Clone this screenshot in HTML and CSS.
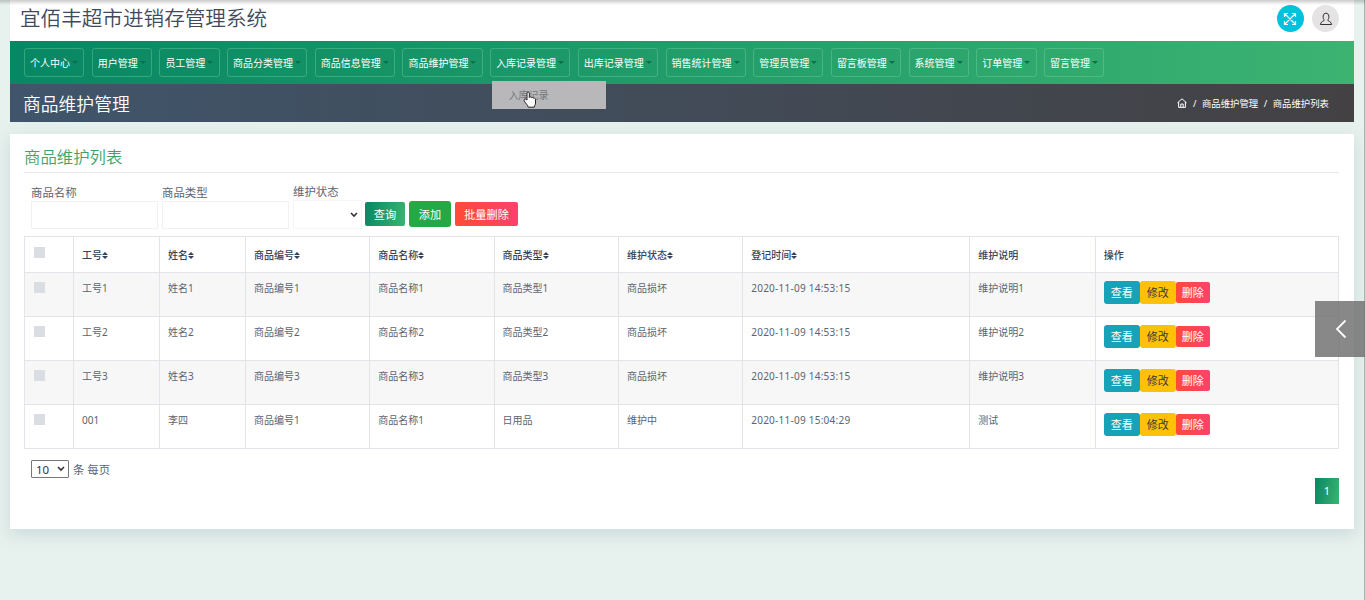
FILE: index.html
```html
<!DOCTYPE html>
<html lang="zh-CN">
<head>
    <meta charset="UTF-8">
    <meta name="viewport" content="width=device-width, initial-scale=1.0">
    <title>商品维护管理</title>
    <link rel="stylesheet" href="styles.css">
</head>
<body>
    <div class="wrapper">
        <!-- 顶部 -->
        <header class="top-bar">
            <h1>宜佰丰超市进销存管理系统</h1>
            <div class="top-icons">
                <a class="round full"><svg width="14" height="14" viewBox="0 0 14 14"><path d="M2 2l10 10M12 2L2 12M1.500 5V1.500H5M9 1.500h3.500V5M1.500 9v3.500H5M9 12.500h3.500V9"/></svg></a>
                <a class="round user"><svg width="14" height="14" viewBox="0 0 14 14"><path d="M5.300 8C3.500 6.500 3.500 1.200 7 1.200S10.500 6.500 8.700 8c0 1.500 3.800 1.200 3.900 4.500H1.400C1.500 9.200 5.300 9.500 5.300 8z"/></svg></a>
            </div>
        </header>

        <!-- 导航 -->
        <nav class="menu">
            <a>个人中心</a>
            <a>用户管理</a>
            <a>员工管理</a>
            <a>商品分类管理</a>
            <a>商品信息管理</a>
            <a>商品维护管理</a>
            <div class="dropdown">
                <a>入库记录管理</a>
                <div class="dropdown-menu">入库记录
                    <svg class="cursor" width="14" height="17" viewBox="0 0 14 17"><path d="M4 9V2.200c0-1.700 2.300-1.700 2.300 0V6.500c.3-1 2-.8 2.200.3.500-.8 2-.5 2.100.5.800-.5 1.900 0 1.900 1V12c0 2-1.200 2.500-1.200 4.200H5.200C5 14 2.500 12.500 1.200 9.800.5 8.300 2.300 7.500 3 8.500z"/></svg>
                </div>
            </div>
            <a>出库记录管理</a>
            <a>销售统计管理</a>
            <a>管理员管理</a>
            <a>留言板管理</a>
            <a>系统管理</a>
            <a>订单管理</a>
            <a>留言管理</a>
        </nav>

        <!-- 面包屑 -->
        <div class="title-bar">
            <h2>商品维护管理</h2>
            <div class="breadcrumb">
                <svg width="10" height="10" viewBox="0 0 10 10"><path d="M.5 4.800L5 .8l4.500 4M1.600 4v5.400h6.800V4M3.800 9.200V6h2.400v3.200"/></svg>
                <span>/</span><span>商品维护管理</span><span>/</span><span>商品维护列表</span>
            </div>
        </div>

        <!-- 列表 -->
        <main class="card">
            <h3>商品维护列表</h3>
            <form class="search">
                <label>商品名称<input type="text"></label>
                <label>商品类型<input type="text"></label>
                <label class="state">维护状态<span class="select"><svg width="8" height="6" viewBox="0 0 8 6"><path d="M1 1l3 3 3-3"/></svg></span></label>
                <button type="button" class="btn query">查询</button>
                <button type="button" class="btn add">添加</button>
                <button type="button" class="btn batch">批量删除</button>
            </form>
            <table>
                <colgroup>
                    <col class="w-check"><col class="w-s"><col class="w-s"><col class="w-m"><col class="w-m"><col class="w-m"><col class="w-m"><col class="w-time"><col class="w-note"><col>
                </colgroup>
                <thead>
                    <tr>
                        <th><i class="check"></i></th>
                        <th>工号<i class="sort"></i></th>
                        <th>姓名<i class="sort"></i></th>
                        <th>商品编号<i class="sort"></i></th>
                        <th>商品名称<i class="sort"></i></th>
                        <th>商品类型<i class="sort"></i></th>
                        <th>维护状态<i class="sort"></i></th>
                        <th>登记时间<i class="sort"></i></th>
                        <th>维护说明</th>
                        <th>操作</th>
                    </tr>
                </thead>
                <tbody>
                    <tr>
                        <td><i class="check"></i></td><td>工号1</td><td>姓名1</td><td>商品编号1</td><td>商品名称1</td><td>商品类型1</td><td>商品损坏</td><td class="time">2020-11-09 14:53:15</td><td>维护说明1</td>
                        <td><div class="actions"><button class="view">查看</button><button class="edit">修改</button><button class="del">删除</button></div></td>
                    </tr>
                    <tr>
                        <td><i class="check"></i></td><td>工号2</td><td>姓名2</td><td>商品编号2</td><td>商品名称2</td><td>商品类型2</td><td>商品损坏</td><td class="time">2020-11-09 14:53:15</td><td>维护说明2</td>
                        <td><div class="actions"><button class="view">查看</button><button class="edit">修改</button><button class="del">删除</button></div></td>
                    </tr>
                    <tr>
                        <td><i class="check"></i></td><td>工号3</td><td>姓名3</td><td>商品编号3</td><td>商品名称3</td><td>商品类型3</td><td>商品损坏</td><td class="time">2020-11-09 14:53:15</td><td>维护说明3</td>
                        <td><div class="actions"><button class="view">查看</button><button class="edit">修改</button><button class="del">删除</button></div></td>
                    </tr>
                    <tr>
                        <td><i class="check"></i></td><td>001</td><td>李四</td><td>商品编号1</td><td>商品名称1</td><td>日用品</td><td>维护中</td><td class="time">2020-11-09 15:04:29</td><td>测试</td>
                        <td><div class="actions"><button class="view">查看</button><button class="edit">修改</button><button class="del">删除</button></div></td>
                    </tr>
                </tbody>
            </table>
            <div class="page-size">
                <span class="size-select">10<svg width="8" height="6" viewBox="0 0 8 6"><path d="M1 1l3 3 3-3"/></svg></span>
                条 每页
            </div>
            <div class="pagination"><a>1</a></div>
        </main>
    </div>

    <div class="side-toggle"><svg width="12" height="20" viewBox="0 0 12 20"><path d="M10.500 1.500L2 10l8.500 8.500"/></svg></div>
</body>
</html>
```
FILE: styles.css
```css
* {
    box-sizing: border-box;
}
body {
    margin: 0;
    height: 600px;
    overflow: hidden;
    background-color: #e7f1ed;
    border-right: 1px solid #aab5b2;
    font-family: "Noto Sans", "Noto Sans CJK SC", sans-serif;
    font-weight: 400;
    font-size: 12px;
    color: #5a6474;
}
/* 页面顶端的阴影 */
body::before {
    content: "";
    position: absolute;
    top: 0;
    left: 0;
    right: 0;
    height: 5px;
    background: linear-gradient(rgba(0, 0, 0, 0.2), rgba(0, 0, 0, 0));
}
svg {
    fill: none;
    stroke: currentColor;
}
h1, h2, h3 {
    margin: 0;
    font-weight: 350;
}
.wrapper {
    width: 1344px;
    margin-left: 10px;
}
.top-bar {
    display: flex;
    justify-content: space-between;
    height: 41px;
    padding: 0 15px 0 10px;
    background-color: #fff;
}
.top-bar h1 {
    font-size: 20.600px;
    line-height: 36px;
    color: #3f4a5e;
}
.top-icons {
    display: flex;
    gap: 8px;
    padding-top: 5px;
}
.round {
    display: flex;
    align-items: center;
    justify-content: center;
    width: 27px;
    height: 27px;
    border-radius: 50%;
}
.full {
    background-color: #00c2dc;
    color: #fff;
}
.full svg {
    margin-right: 1px;
    stroke-width: 1.200;
}
.user {
    background-color: #e6e3e4;
    color: #333;
}
.menu {
    display: flex;
    gap: 7.400px;
    height: 43px;
    padding: 7px 14px;
    background: linear-gradient(90deg, #078763, #3cb371);
}
.menu a {
    display: flex;
    align-items: center;
    height: 29px;
    padding: 0 5.300px 0 5px;
    border: 1px solid rgba(130, 220, 170, 0.35);
    border-radius: 3px;
    font-size: 10px;
    color: #fff;
    white-space: nowrap;
}
.menu a::after {
    content: "";
    margin-left: 2px;
    border: 3px solid transparent;
    border-top-color: #08704d;
    border-bottom: 0;
}
.dropdown {
    position: relative;
}
.dropdown-menu {
    position: absolute;
    top: 33px;
    left: 1.500px;
    z-index: 2;
    width: 114px;
    height: 28px;
    padding-left: 17px;
    background-color: #b8b8ba;
    color: #77777c;
    font-size: 10px;
    line-height: 28px;
}
.cursor {
    position: absolute;
    left: 31px;
    top: 10px;
    fill: #fff;
    stroke: #222;
}
.title-bar {
    display: flex;
    justify-content: space-between;
    align-items: center;
    height: 38px;
    padding: 0 25px 0 13px;
    background: linear-gradient(90deg, #40556b, #434144);
    color: #fff;
}
.title-bar h2 {
    font-size: 17.800px;
}
.breadcrumb {
    display: flex;
    align-items: center;
    gap: 5.500px;
    font-size: 9.400px;
}
.card {
    height: 395px;
    margin-top: 12px;
    padding: 11px 15px 0 14px;
    background-color: #fff;
    box-shadow: 0 5px 15px rgba(110, 150, 170, 0.25);
}
.card h3 {
    height: 28px;
    border-bottom: 1px solid #e6e9ec;
    font-size: 16.400px;
    line-height: 24px;
    color: #3da468;
}
.search {
    display: flex;
    align-items: flex-start;
    height: 63px;
    padding: 11px 0 0 7px;
}
.search label {
    display: flex;
    flex-direction: column;
    margin-right: 4px;
    font-size: 11.400px;
    line-height: 17px;
}
.search input {
    width: 127px;
    height: 28px;
    border: 1px solid #eff1f3;
}
.search .state {
    margin: -1px 3px 0 0;
}
.select {
    display: flex;
    align-items: center;
    justify-content: flex-end;
    width: 69px;
    height: 29px;
    padding-right: 3px;
    border: 1px solid #f4f5f6;
    color: #333;
}
.select svg, .size-select svg {
    stroke-width: 1.600;
}
.btn {
    height: 24px;
    margin: 18px 4px 0 0;
    padding: 0;
    border: 0;
    border-radius: 2px;
    font-family: inherit;
    font-size: 11.200px;
    color: #fff;
}
.query {
    width: 40px;
    background: linear-gradient(100deg, #078763, #3cb371);
}
.add {
    width: 42px;
    height: 26px;
    margin-top: 17px;
    border-radius: 3px;
    background-color: #28a745;
}
.batch {
    width: 63px;
    background: linear-gradient(90deg, #ff4b36, #ff416c);
}
table {
    width: 1315px;
    table-layout: fixed;
    border-collapse: collapse;
    font-size: 10px;
}
.w-check { width: 49px; }
.w-s { width: 86px; }
.w-m { width: 124.300px; }
.w-time { width: 227px; }
.w-note { width: 125.500px; }
th, td {
    padding: 0 8px;
    border: 1px solid #e1e4e8;
    text-align: left;
    vertical-align: top;
    white-space: nowrap;
}
th {
    height: 36px;
    padding-top: 11px;
    font-weight: 500;
    line-height: 15px;
    color: #37435a;
}
td {
    height: 44px;
    padding-top: 8px;
    line-height: 15px;
}
tbody tr:nth-child(odd) {
    background-color: #f7f7f8;
}
.time {
    letter-spacing: 0.250px;
}
.check {
    display: block;
    width: 11px;
    height: 11px;
    margin-left: 1px;
    background-color: #dadde1;
}
th .check {
    margin-top: -1px;
}
td .check {
    margin-top: 1px;
}
/* 上下排序箭头 */
.sort {
    display: inline-block;
    width: 6px;
    height: 7px;
}
.sort::before, .sort::after {
    content: "";
    display: block;
    border: 3px solid transparent;
}
.sort::before {
    border-top: 0;
    border-bottom-color: #37435a;
    margin-bottom: 1px;
}
.sort::after {
    border-bottom: 0;
    border-top-color: #37435a;
}
.actions {
    display: flex;
    align-items: center;
}
.actions button {
    width: 36px;
    height: 23px;
    padding: 0;
    border: 0;
    border-radius: 3px;
    font-family: inherit;
    font-size: 11px;
    line-height: 20px;
    color: #fff;
}
.actions .view {
    background-color: #17a2b8;
}
.actions .edit {
    background-color: #ffc107;
    color: #343a40;
}
.actions .del {
    width: 34px;
    height: 21px;
    border-radius: 2px;
    background: linear-gradient(90deg, #ff4b36, #ff416c);
}
.page-size {
    display: flex;
    align-items: center;
    gap: 4px;
    height: 18px;
    margin: 11px 0 0 7px;
    font-size: 11.400px;
}
.size-select {
    display: flex;
    align-items: center;
    justify-content: space-between;
    width: 38px;
    height: 18px;
    padding: 0 3px 0 4px;
    border: 1px solid #777;
    border-radius: 1px;
    font-size: 11.500px;
    color: #333;
}
.pagination {
    display: flex;
    justify-content: flex-end;
}
.pagination a {
    width: 24px;
    height: 26px;
    background: linear-gradient(100deg, #078763, #3cb371);
    color: #fff;
    font-size: 11px;
    line-height: 26px;
    text-align: center;
}
.side-toggle {
    position: absolute;
    top: 301px;
    right: 0;
    z-index: 3;
    display: flex;
    align-items: center;
    width: 50px;
    height: 56px;
    padding-left: 20px;
    background-color: rgba(115, 115, 115, 0.85);
    color: #fff;
}
.side-toggle svg {
    stroke-width: 1.800;
}
```
